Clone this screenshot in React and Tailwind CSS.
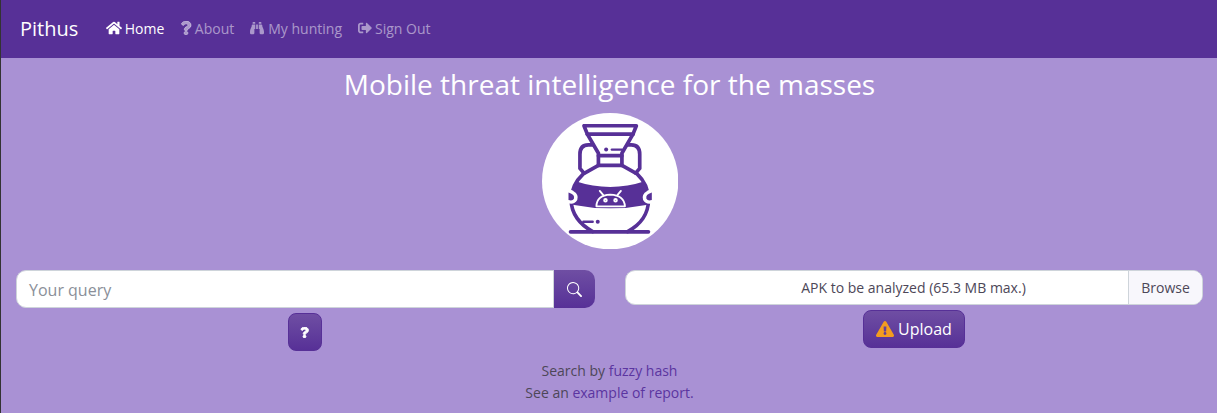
import React from "react";
import { FaHome, FaQuestion, FaBinoculars, FaSignOutAlt, FaExclamationTriangle } from "react-icons/fa";
import { BsSearch } from "react-icons/bs";

const P = "#573097";

function Vase() {
  return (
    <svg width="136" height="136" viewBox="37 25 405 405" className="block">
      <circle cx="240" cy="228" r="203" fill="#fff" />
      <g fill="none" stroke={P} strokeWidth="11" strokeLinejoin="round" strokeLinecap="round">
        <path d="M162 63H318L308 88L275 145V181H205V145L172 88Z" />
        <path d="M172 88H308" />
        <path d="M205 152H275" />
        <path d="M188 120H175Q150 120 150 148V190L162 204" />
        <path d="M292 120H303Q328 120 328 148V190L316 204" />
        <path d="M205 181L160 206C132 232 124 262 124 285C124 325 150 358 188 378" />
        <path d="M275 181L320 206C348 232 354 262 354 285C354 325 330 358 292 378" />
      </g>
      <path d="M137 228Q240 262 343 228L356 285L352 298Q240 320 128 298L122 285Z" fill={P} />
      <g fill="none" stroke="#fff" strokeWidth="5.5" strokeLinecap="round" strokeLinejoin="round">
        <path d="M199 303Q200 270 240 268Q282 270 284 303Z" />
        <path d="M219 269L209 257M262 269L272 257" />
        <circle cx="226" cy="285" r="4" />
        <circle cx="256" cy="285" r="4" />
      </g>
      <path d="M116 250L128 256Q148 268 142 284Q134 298 116 294Z" fill="#fff" />
      <path d="M116 262Q136 268 132 280Q128 288 116 284Z" fill={P} />
      <path d="M364 250L352 256Q332 268 338 284Q346 298 364 294Z" fill="#fff" />
      <path d="M364 262Q344 268 348 280Q352 288 364 284Z" fill={P} />
      <path d="M122 379H354" stroke={P} strokeWidth="11" strokeLinecap="round" />
      <path d="M160 349H188" stroke={P} strokeWidth="7" strokeLinecap="round" />
      <circle cx="203" cy="349" r="6" fill={P} />
      <path d="M245 134H275" stroke={P} strokeWidth="7" strokeLinecap="round" />
      <circle cx="228" cy="134" r="6" fill={P} />
    </svg>
  );
}

function NavLink({ icon, children, active, gap }) {
  return (
    <a href="#" className={`flex items-center px-2 mb-[2px] ${gap} ${active ? "text-white" : "text-white/50"}`}>
      {icon}
      <span>{children}</span>
    </a>
  );
}

export default function App() {
  return (
    <div className="h-[413px] overflow-hidden bg-[#a991d4] border-l border-[#333] text-[#4d4758] font-['Open_Sans','Noto_Sans',sans-serif]">
      <nav className="h-[58px] bg-[#573097] flex items-center pl-[19px] text-[14px]">
        <a href="#" className="text-white text-[20px] mr-[20px]">Pithus</a>
        <NavLink active gap="gap-[2.5px]" icon={<FaHome className="text-[16px]" />}>Home</NavLink>
        <NavLink gap="gap-[2px]" icon={<FaQuestion strokeWidth={30} stroke="currentColor" className="text-[14px] -ml-[1.5px]" />}>About</NavLink>
        <NavLink gap="gap-[4px]" icon={<FaBinoculars className="text-[14px]" />}>My hunting</NavLink>
        <NavLink gap="gap-[3px]" icon={<FaSignOutAlt className="text-[14px]" />}>Sign Out</NavLink>
      </nav>
      <h1 className="text-white text-center text-[28px] leading-[33px] font-normal mt-[10px] pl-[1px]">Mobile threat intelligence for the masses</h1>
      <div className="flex justify-center mt-[12px] pl-[2px]"><Vase /></div>
      <div className="grid grid-cols-[609px_1fr] mt-[21px]">
        <div className="pl-[15px] pr-[15px] flex flex-col items-center">
          <div className="flex w-full h-[38px]">
            <div className="flex-1 bg-white rounded-l-[10px] border border-[#ced4da] flex items-center px-3 pt-[2px] text-[16px] text-[#8a8f99]">Your query</div>
            <button className="w-[41px] flex items-center justify-center rounded-r-[10px] text-white bg-gradient-to-b from-[#6f4ea3] to-[#573097]"><BsSearch className="text-[15px]" /></button>
          </div>
          <button className="mt-[5px] mr-[2px] w-[34px] h-[38px] flex items-center justify-center rounded-[8px] text-white border border-[#573097] bg-gradient-to-b from-[#6f4ea3] to-[#573097]"><FaQuestion strokeWidth={40} stroke="currentColor" className="text-[11px]" /></button>
        </div>
        <div className="pl-[15px] pr-[14px] flex flex-col items-center">
          <div className="flex w-full h-[35px] bg-white rounded-[10px] border border-[#ced4da] text-[14px] overflow-hidden">
            <div className="flex-1 flex items-center justify-center pl-[73px]">APK to be analyzed (65.3 MB max.)</div>
            <div className="w-[74px] flex items-center justify-center bg-[#f8f7fc] border-l border-[#ced4da]">Browse</div>
          </div>
          <button className="mt-[5px] h-[38px] px-3 flex items-center gap-[4px] rounded-[8px] text-white text-[16px] border border-[#573097] bg-gradient-to-b from-[#6f4ea3] to-[#573097]"><FaExclamationTriangle className="text-[18px] text-[#f39c1f]" />Upload</button>
        </div>
      </div>
      <div className="text-center text-[14px] leading-[22px] mt-[8.5px] pl-[1px]">
        <div>Search by <a href="#" className="text-[#5b35a0]">fuzzy hash</a></div>
        <div>See an <a href="#" className="text-[#5b35a0]">example of report.</a></div>
      </div>
    </div>
  );
}
